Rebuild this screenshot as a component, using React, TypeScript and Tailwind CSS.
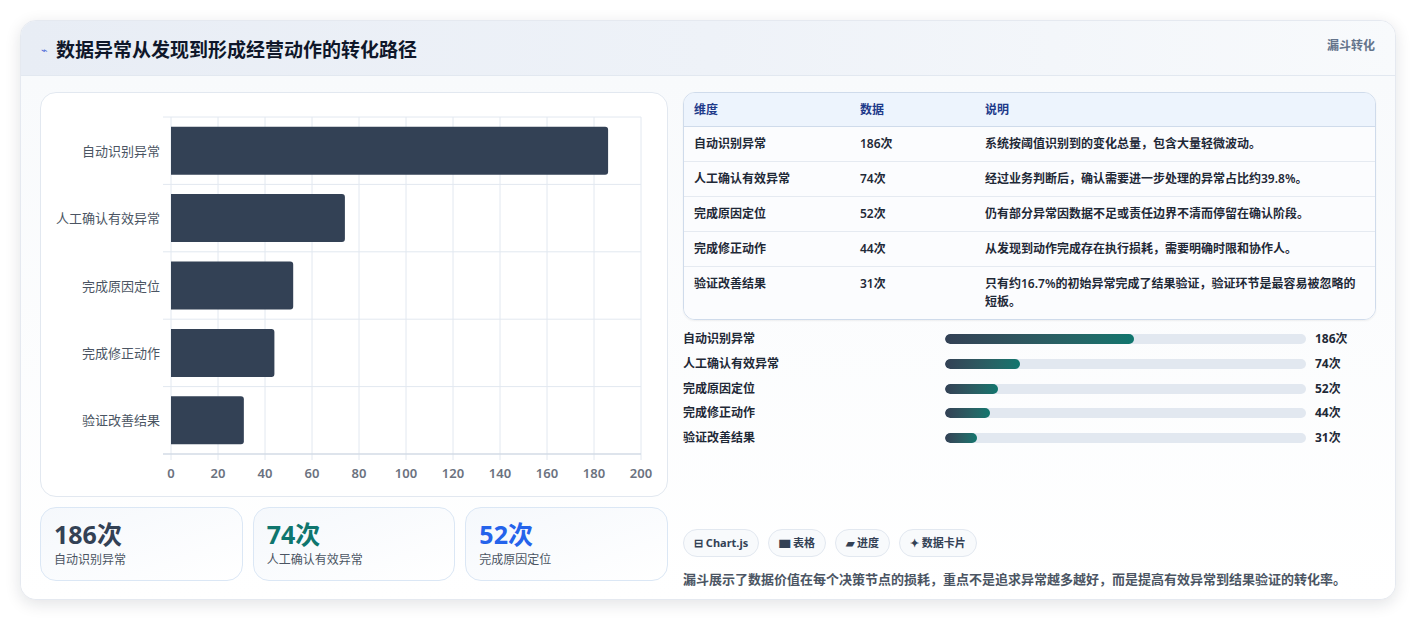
import React from "react";

const rows = [
  { k: "自动识别异常", v: 186, d: "系统按阈值识别到的变化总量，包含大量轻微波动。" },
  { k: "人工确认有效异常", v: 74, d: "经过业务判断后，确认需要进一步处理的异常占比约39.8%。" },
  { k: "完成原因定位", v: 52, d: "仍有部分异常因数据不足或责任边界不清而停留在确认阶段。" },
  { k: "完成修正动作", v: 44, d: "从发现到动作完成存在执行损耗，需要明确时限和协作人。" },
  { k: "验证改善结果", v: 31, d: "只有约16.7%的初始异常完成了结果验证，验证环节是最容易被忽略的短板。" },
];

const font = { fontFamily: '"Noto Sans", "Noto Sans CJK SC", sans-serif' };

function Chart() {
  const x0 = 130, x1 = 600, y0 = 24, y1 = 361;
  const rh = (y1 - y0) / 5;
  return (
    <svg viewBox="0 0 627 404" width="627" height="404" className="block">
      {Array.from({ length: 11 }).map((_, i) => {
        const x = x0 + (i * (x1 - x0)) / 10;
        return (
          <g key={i}>
            <line x1={x} y1={y0} x2={x} y2={y1 + 6} stroke="#e2e8f0" />
            <text x={x} y={385} textAnchor="middle" fontSize="13" fontWeight="600" fill="#6b7280" style={font}>{i * 20}</text>
          </g>
        );
      })}
      {Array.from({ length: 6 }).map((_, i) => (
        <line key={i} x1={x0 - 8} x2={x1} y1={y0 + i * rh} y2={y0 + i * rh} stroke="#e2e8f0" />
      ))}
      <line x1={x0 - 8} x2={x1} y1={y1} y2={y1} stroke="#cbd5e1" />
      {rows.map((r, i) => {
        const cy = y0 + i * rh + rh / 2;
        return (
          <g key={r.k}>
            <text x={119} y={cy + 5} textAnchor="end" fontSize="13" fill="#4b5563" style={font}>{r.k}</text>
            <path d={`M${x0} ${cy - 24} H${x0 + (r.v / 200) * (x1 - x0) - 3} a3 3 0 0 1 3 3 V${cy + 21} a3 3 0 0 1 -3 3 H${x0} Z`} fill="#334155" />
          </g>
        );
      })}
    </svg>
  );
}

export default function App() {
  return (
    <div className="w-[1417px] h-[621px] bg-white p-5 pb-0" style={font}>
      <div className="w-[1376px] h-[580px] rounded-2xl bg-white shadow-[0_4px_16px_rgba(15,23,42,0.12)] border border-[#e5e9f0] overflow-hidden flex flex-col">
        <div className="h-[55px] shrink-0 flex items-start justify-between px-5 bg-gradient-to-r from-[#e8edf5] via-[#eef2f8] to-[#f8fafc] border-b border-[#e2e8f0]">
          <div className="flex items-center gap-2 mt-[15px]">
            <span className="text-[#4f6bd8] text-[11px]">⌁</span>
            <span className="text-[19px] font-bold text-[#0f172a]">数据异常从发现到形成经营动作的转化路径</span>
          </div>
          <span className="mt-[16px] text-[12px] font-bold text-[#64748b]">漏斗转化</span>
        </div>
        <div className="flex gap-[15px] px-[19px] pt-[16px] bg-gradient-to-b from-[#f8fafc] to-white flex-1">
          <div className="w-[628px] flex flex-col gap-[10px]">
            <div className="h-[405px] rounded-2xl border border-[#e2e8f0] bg-white overflow-hidden"><Chart /></div>
            <div className="grid grid-cols-3 gap-[10px]">
              {[["186次", "自动识别异常", "text-[#334155]"], ["74次", "人工确认有效异常", "text-[#0f766e]"], ["52次", "完成原因定位", "text-[#2563eb]"]].map(([a, b, c]) => (
                <div key={a} className="h-[74px] rounded-2xl border border-[#dbe7f5] bg-gradient-to-br from-[#f5f8fc] to-white px-[13px] pt-[10px]">
                  <div className={`text-[25px] leading-[32px] font-bold ${c}`}>{a}</div>
                  <div className="text-[12px] text-[#4b5563] mt-[1px]">{b}</div>
                </div>
              ))}
            </div>
          </div>
          <div className="flex-1 flex flex-col">
            <div className="rounded-xl border border-[#cfdbeb] overflow-hidden shadow-[0_1px_2px_rgba(0,0,0,0.06)] text-[12px]">
              <div className="flex h-[34px] items-center bg-[#edf4fd] border-b border-[#cfdbeb] font-bold text-[#1e3a8a] px-[10px]">
                <div className="w-[166px]">维度</div><div className="w-[125px]">数据</div><div>说明</div>
              </div>
              {rows.map((r, i) => (
                <div key={r.k} className={`flex px-[10px] py-[8px] bg-[#fbfcfe] font-semibold text-[#1f2937] leading-[18px] ${i < 4 ? "border-b border-[#e5eaf1]" : ""}`}>
                  <div className="w-[166px] shrink-0">{r.k}</div>
                  <div className="w-[125px] shrink-0">{r.v}次</div>
                  <div className="flex-1">{r.d}</div>
                </div>
              ))}
            </div>
            <div className="mt-[10px] flex flex-col gap-[6px]">
              {rows.map((r) => (
                <div key={r.k} className="flex items-center h-[18.7px] text-[12px] font-semibold text-[#1f2937]">
                  <div className="w-[262px]">{r.k}</div>
                  <div className="w-[361px] h-[10px] rounded-full bg-[#e2e8f0] overflow-hidden">
                    <div className="h-full rounded-full bg-gradient-to-r from-[#334155] to-[#0f766e]" style={{ width: `${(r.v / 355) * 100}%` }} />
                  </div>
                  <div className="ml-[9px] font-bold">{r.v}次</div>
                </div>
              ))}
            </div>
            <div className="mt-[82px] flex gap-[9px]">
              {["⊟ Chart.js", "▆ 表格", "▰ 进度", "✦ 数据卡片"].map((t) => (
                <span key={t} className="h-[28px] px-[10px] rounded-full border border-[#e2e8f0] bg-[#f8fafc] text-[11px] font-bold text-[#334155] flex items-center">{t}</span>
              ))}
            </div>
            <div className="mt-[13px] text-[13px] font-semibold text-[#4b5563]">漏斗展示了数据价值在每个决策节点的损耗，重点不是追求异常越多越好，而是提高有效异常到结果验证的转化率。</div>
          </div>
        </div>
      </div>
    </div>
  );
}
